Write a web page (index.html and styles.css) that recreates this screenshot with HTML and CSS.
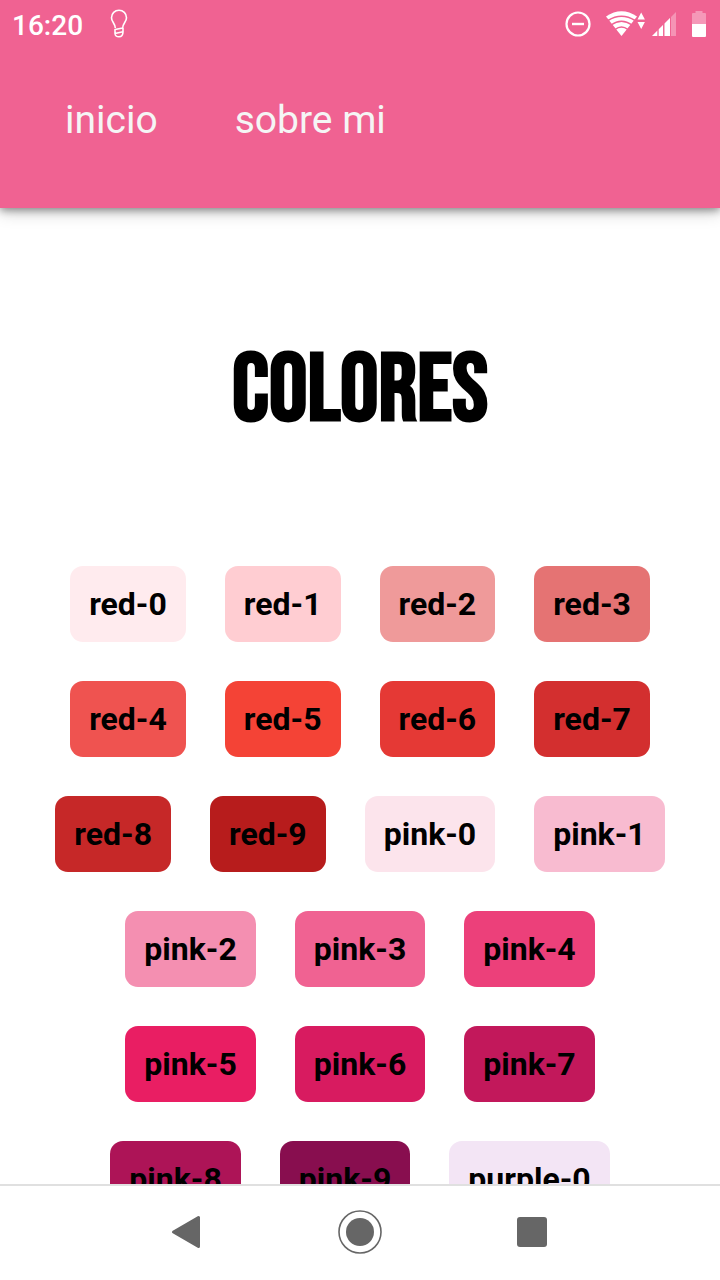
FILE: index.html
```html
<!DOCTYPE html>
<html lang="es">
<head>
<meta charset="utf-8">
<meta name="viewport" content="width=device-width, initial-scale=1">
<title>Colores</title>
<link rel="stylesheet" href="styles.css">
</head>
<body class="screen">
<header class="header">
  <div class="status">
    <div class="status-left">
      <time class="clock">16:20</time>
      <svg class="bulb" width="18" height="30" viewBox="0 0 18 30" fill="none" stroke="#fff" stroke-width="1.6" stroke-linejoin="round" aria-hidden="true">
        <path d="M5.300 19C5 14 1.500 13 1.500 8.700a7.500 7.500 0 0 1 15 0C16.500 13 12.700 14 12.700 19L5 20.500v4l8-1.800M5 24.500c.2 2.200 1.500 3.300 4 3.300 2.800 0 4-1.500 4-5V19"/>
      </svg>
    </div>
    <div class="status-right">
      <svg width="26" height="26" viewBox="0 0 26 26" fill="none" stroke="#fff" aria-hidden="true">
        <circle cx="13" cy="13" r="11.500" stroke-width="2.200"/>
        <path d="M7 13h12" stroke-width="2.400"/>
      </svg>
      <svg class="wifi" width="40" height="26" viewBox="0 0 40 26" aria-hidden="true">
        <path fill="#fff" d="M0 5.500Q15.500-5 31 5.500L15.500 25z"/>
        <path fill="none" stroke="#f06292" stroke-width="1.500" d="M2 9.500q13.500-8.500 27 0M5 14q10.500-7.500 21 0M9 18.500q6.500-5 13 0"/>
        <path fill="#fff" d="M31.500 8.500 35.200 1.500l3.700 7zM31.500 11h7.400l-3.700 7z"/>
      </svg>
      <svg class="signal" width="24" height="24" viewBox="0 0 24 24" aria-hidden="true">
        <path fill="#fff" fill-opacity=".32" d="M0 24 24 0v24z"/>
        <path fill="#fff" d="M0 24 5.500 18.500V24zM6.500 17.500l4.500-4.500v11H6.500zM12.500 11.500l5.500-5.500v18h-5.500z"/>
        <path stroke="#f06292" d="M6 17v7M11.700 11v13M18.500 5v19"/>
      </svg>
      <svg class="battery" width="14" height="26" viewBox="0 0 14 26" aria-hidden="true">
        <path fill="#fff" fill-opacity=".35" d="M3.500 0h7v2H13q1 0 1 1v10H0V3q0-1 1-1h2.500z"/>
        <path fill="#fff" d="M0 13h14v12q0 1-1 1H1q-1 0-1-1z"/>
      </svg>
    </div>
  </div>
  <nav class="menu">
    <a class="menu-link" href="#inicio">inicio</a>
    <a class="menu-link" href="#sobre-mi">sobre mi</a>
  </nav>
</header>
<main class="content">
  <h1 class="title">COLORES</h1>
  <ul class="swatches">
    <li class="swatch red-0">red-0</li>
    <li class="swatch red-1">red-1</li>
    <li class="swatch red-2">red-2</li>
    <li class="swatch red-3">red-3</li>
    <li class="swatch red-4">red-4</li>
    <li class="swatch red-5">red-5</li>
    <li class="swatch red-6">red-6</li>
    <li class="swatch red-7">red-7</li>
    <li class="swatch red-8">red-8</li>
    <li class="swatch red-9">red-9</li>
    <li class="swatch pink-0">pink-0</li>
    <li class="swatch pink-1">pink-1</li>
    <li class="swatch pink-2">pink-2</li>
    <li class="swatch pink-3">pink-3</li>
    <li class="swatch pink-4">pink-4</li>
    <li class="swatch pink-5">pink-5</li>
    <li class="swatch pink-6">pink-6</li>
    <li class="swatch pink-7">pink-7</li>
    <li class="swatch pink-8">pink-8</li>
    <li class="swatch pink-9">pink-9</li>
    <li class="swatch purple-0">purple-0</li>
  </ul>
</main>
<footer class="system-bar">
  <button class="system-button" type="button" aria-label="Atrás">
    <svg width="44" height="44" viewBox="0 0 44 44" aria-hidden="true"><path fill="#666" stroke="#666" stroke-width="3" stroke-linejoin="round" d="M7.500 22 32.500 7.500v29z"/></svg>
  </button>
  <button class="system-button" type="button" aria-label="Inicio">
    <svg width="44" height="44" viewBox="0 0 44 44" aria-hidden="true"><circle cx="22" cy="22" r="21" fill="none" stroke="#666" stroke-width="1.600"/><circle cx="22" cy="22" r="14" fill="#666"/></svg>
  </button>
  <button class="system-button" type="button" aria-label="Recientes">
    <svg width="44" height="44" viewBox="0 0 44 44" aria-hidden="true"><rect x="7" y="7" width="30" height="30" rx="3" fill="#666"/></svg>
  </button>
</footer>
</body>
</html>
```
FILE: styles.css
```css
* {
  box-sizing: border-box;
}

.screen {
  display: flex;
  flex-direction: column;
  height: 100vh;
  margin: 0;
  background: #fff;
  color: #000;
  font-family: Roboto, "Liberation Sans", sans-serif;
}

.header {
  position: relative;
  z-index: 1;
  flex: none;
  padding-bottom: 64px;
  background: #f06292;
  box-shadow: 0 2px 8px rgba(0, 0, 0, .4), 0 4px 16px rgba(0, 0, 0, .2);
}

.status,
.status-left,
.status-right {
  display: flex;
  align-items: center;
}

.status {
  justify-content: space-between;
  height: 48px;
  padding: 0 14px 0 12px;
}

.status-left {
  gap: 27px;
}

.clock {
  padding-top: 3px;
  color: #fff;
  font-size: 28px;
  font-weight: 500;
  line-height: 45px;
}

.wifi {
  margin-left: 15px;
}

.signal {
  margin-left: 6px;
}

.battery {
  margin-left: 16px;
}

.menu {
  display: flex;
  gap: 77px;
  padding: 48px 65px 0;
}

.menu-link {
  color: #f5f5f5;
  font-size: 39px;
  line-height: 48px;
  text-decoration: none;
}

.content {
  flex: 1;
  min-height: 0;
  overflow-y: auto;
  scrollbar-width: none;
}

.title {
  margin: 0;
  padding: 134px 48px 124px;
  font-family: "Bebas Neue", "Roboto Condensed", Roboto, sans-serif;
  font-size: 96px;
  font-weight: 700;
  line-height: 100px;
  text-align: center;
}

.swatches {
  display: flex;
  flex-wrap: wrap;
  justify-content: center;
  gap: 39px;
  margin: 0;
  padding: 0 48px 39px;
  list-style: none;
}

.swatch {
  padding: 19px;
  border-radius: 13px;
  font-size: 32px;
  font-weight: 700;
  line-height: 38px;
}

.red-0 { background: #ffebee; }
.red-1 { background: #ffcdd2; }
.red-2 { background: #ef9a9a; }
.red-3 { background: #e57373; }
.red-4 { background: #ef5350; }
.red-5 { background: #f44336; }
.red-6 { background: #e53935; }
.red-7 { background: #d32f2f; }
.red-8 { background: #c62828; }
.red-9 { background: #b71c1c; }
.pink-0 { background: #fce4ec; }
.pink-1 { background: #f8bbd0; }
.pink-2 { background: #f48fb1; }
.pink-3 { background: #f06292; }
.pink-4 { background: #ec407a; }
.pink-5 { background: #e91e63; }
.pink-6 { background: #d81b60; }
.pink-7 { background: #c2185b; }
.pink-8 { background: #ad1457; }
.pink-9 { background: #880e4f; }
.purple-0 { background: #f3e5f5; }

.system-bar {
  display: flex;
  flex: none;
  align-items: center;
  justify-content: center;
  gap: 128px;
  height: 96px;
  padding-bottom: 2px;
  border-top: 2px solid #e0e0e0;
  background: #fff;
}

.system-button {
  display: flex;
  padding: 0;
  border: 0;
  background: none;
}
```
